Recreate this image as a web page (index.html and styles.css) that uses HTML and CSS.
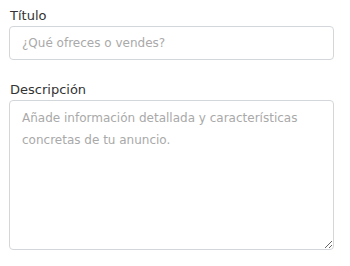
FILE: index.html
```html
<!DOCTYPE html>
<html lang="es">
<head>
<meta charset="utf-8">
<link rel="stylesheet" href="styles.css">
</head>
<body>
<form class="form">
  <div class="field">
    <label class="label" for="titulo">Título</label>
    <input class="input" id="titulo" type="text" placeholder="¿Qué ofreces o vendes?">
  </div>
  <div class="field">
    <label class="label" for="desc">Descripción</label>
    <textarea class="textarea" id="desc" placeholder="Añade información detallada y características concretas de tu anuncio."></textarea>
  </div>
</form>
</body>
</html>
```
FILE: styles.css
```css
html, body {
  margin: 0;
  padding: 0;
  background: #fff;
}
.form {
  padding: 8px 16px 0 9px;
  display: flex;
  flex-direction: column;
  gap: 22px;
  font-family: "DejaVu Sans", Verdana, sans-serif;
}
.field {
  display: flex;
  flex-direction: column;
  gap: 3px;
}
.label {
  font-size: 13px;
  line-height: 15px;
  color: #333;
  padding-left: 1px;
}
.input, .textarea {
  box-sizing: border-box;
  width: 325px;
  border: 1px solid #d3d6da;
  border-radius: 4px;
  font-family: "DejaVu Sans", Verdana, sans-serif;
  font-size: 12px;
  color: #333;
  margin: 0;
  background: #fff;
  outline: none;
}
.input {
  height: 34px;
  padding: 0 12px;
}
.textarea {
  height: 150px;
  padding: 6px 12px;
  line-height: 22px;
  resize: vertical;
}
.input::placeholder, .textarea::placeholder {
  color: #a9a9a9;
}
```
